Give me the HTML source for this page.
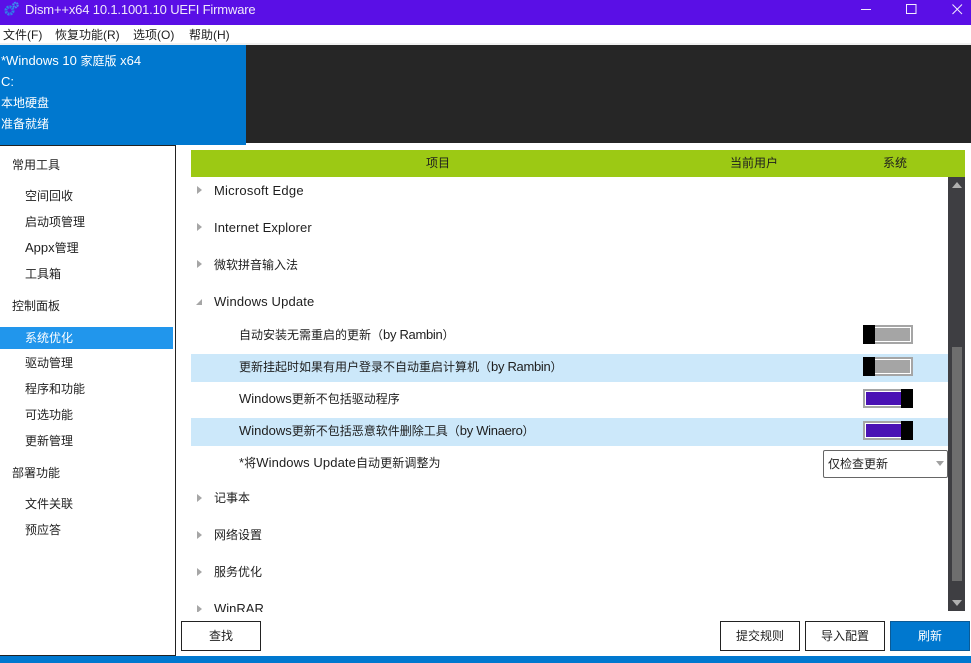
<!DOCTYPE html>
<html><head><meta charset="utf-8">
<style>
*{box-sizing:border-box}
html,body{margin:0;padding:0;width:971px;height:663px;overflow:hidden;background:#fff}
body{position:relative;font-family:"Liberation Sans","Noto Sans CJK SC",sans-serif;font-size:12px;color:#1e1e1e}
.a{position:absolute}
.t{position:absolute;white-space:nowrap;line-height:18px;height:18px}
.t b{font-weight:normal;font-size:13px}
.t b.n{letter-spacing:-.3px}
.w{color:#fff}
.arr{position:absolute;width:0;height:0;border-top:4px solid transparent;border-bottom:4px solid transparent;border-left:5px solid #a6a6a6}
.sw{position:absolute;left:863px;width:50px;height:19px;border:2px solid #a5a5a5;background:#a5a5a5}
.sw i{position:absolute;display:block}
.btn{position:absolute;top:621px;height:30px;border:1px solid #222;background:#fff;text-align:center;line-height:28px;font-size:12px}
</style></head><body>
<div class="a" style="left:0;top:0;width:971px;height:25px;background:#5a0fe6"></div>
<svg class="a" style="left:3px;top:1px" width="18" height="18" viewBox="0 0 18 18">
<circle cx="6.5" cy="9.500" r="3.600" fill="none" stroke="#2f7ee8" stroke-width="3" stroke-dasharray="2 .8"/>
<circle cx="12.500" cy="4" r="2.200" fill="none" stroke="#3f8cf0" stroke-width="2.200" stroke-dasharray="1.600 .6"/>
</svg>
<div class="t" style="left:25px;top:1px;font-size:13px;color:#efe8fb;letter-spacing:-.16px">Dism++x64 10.1.1001.10 UEFI Firmware</div>
<svg class="a" style="left:855px;top:0" width="116" height="25" viewBox="0 0 116 25">
<path d="M6 9.500H16" stroke="#f3edfd" stroke-width="1" fill="none"/>
<rect x="51.500" y="4.500" width="9.500" height="9" stroke="#f3edfd" stroke-width="1" fill="none"/>
<path d="M97.500 4.500L107 14M107 4.500L97.500 14" stroke="#f3edfd" stroke-width="1" fill="none"/>
</svg>

<div class="t" style="left:3px;top:26px">文件(F)</div>
<div class="t" style="left:55px;top:26px">恢复功能(R)</div>
<div class="t" style="left:133px;top:26px">选项(O)</div>
<div class="t" style="left:189px;top:26px">帮助(H)</div>
<div class="a" style="left:0;top:43px;width:971px;height:2px;background:#f0f0f0"></div>

<div class="a" style="left:0;top:45px;width:246px;height:100px;background:#0078cf"></div>
<div class="a" style="left:246px;top:45px;width:725px;height:98px;background:#262626"></div>
<div class="t w" style="left:1px;top:52px"><b>*Windows 10 </b>家庭版<b> x64</b></div>
<div class="t w" style="left:1px;top:73px"><b>C:</b></div>
<div class="t w" style="left:1px;top:94px">本地硬盘</div>
<div class="t w" style="left:1px;top:115px">准备就绪</div>

<div class="a" style="left:0;top:145px;width:176px;height:511px;background:#fff;border-top:1px solid #222;border-right:1px solid #222;border-bottom:1px solid #222"></div>
<div class="t" style="left:12px;top:156px">常用工具</div>
<div class="t" style="left:25px;top:187px">空间回收</div>
<div class="t" style="left:25px;top:213px">启动项管理</div>
<div class="t" style="left:25px;top:239px"><b>Appx</b>管理</div>
<div class="t" style="left:25px;top:265px">工具箱</div>
<div class="t" style="left:12px;top:297px">控制面板</div>
<div class="a" style="left:0;top:327px;width:173px;height:22px;background:#2196ec"></div>
<div class="t w" style="left:25px;top:329px">系统优化</div>
<div class="t" style="left:25px;top:354px">驱动管理</div>
<div class="t" style="left:25px;top:380px">程序和功能</div>
<div class="t" style="left:25px;top:406px">可选功能</div>
<div class="t" style="left:25px;top:432px">更新管理</div>
<div class="t" style="left:12px;top:464px">部署功能</div>
<div class="t" style="left:25px;top:495px">文件关联</div>
<div class="t" style="left:25px;top:521px">预应答</div>

<div class="a" style="left:191px;top:150px;width:774px;height:27px;background:#9cc914"></div>
<div class="t" style="left:426px;top:154px">项目</div>
<div class="t" style="left:730px;top:154px">当前用户</div>
<div class="t" style="left:883px;top:154px">系统</div>

<div class="a" style="left:191px;top:354px;width:757px;height:28px;background:#cce8fa"></div>
<div class="a" style="left:191px;top:418px;width:757px;height:28px;background:#cce8fa"></div>

<div class="arr" style="left:197px;top:186px"></div>
<div class="t" style="left:214px;top:182px;letter-spacing:.22px"><b>Microsoft Edge</b></div>
<div class="arr" style="left:197px;top:223px"></div>
<div class="t" style="left:214px;top:219px;letter-spacing:.1px"><b>Internet Explorer</b></div>
<div class="arr" style="left:197px;top:260px"></div>
<div class="t" style="left:214px;top:256px">微软拼音输入法</div>
<svg class="a" style="left:195px;top:298px" width="9" height="9"><path d="M1 7H7V1Z" fill="#a6a6a6"/></svg>
<div class="t" style="left:214px;top:293px;letter-spacing:.15px"><b>Windows Update</b></div>

<div class="t" style="left:239px;top:326px">自动安装无需重启的更新（<b class="n">by Rambin</b>）</div>
<div class="t" style="left:239px;top:358px">更新挂起时如果有用户登录不自动重启计算机（<b class="n">by Rambin</b>）</div>
<div class="t" style="left:239px;top:390px"><b>Windows</b>更新不包括驱动程序</div>
<div class="t" style="left:239px;top:422px"><b>Windows</b>更新不包括恶意软件删除工具（<b class="n">by Winaero</b>）</div>
<div class="t" style="left:239px;top:454px;letter-spacing:.1px"><b>*</b>将<b>Windows Update</b>自动更新调整为</div>

<div class="sw" style="top:325px"><i style="left:0;top:0;width:46px;height:15px;border:1px solid #fff;background:#a5a5a5"></i><i style="left:-2px;top:-2px;width:12px;height:19px;background:#000"></i></div>
<div class="sw" style="top:357px"><i style="left:0;top:0;width:46px;height:15px;border:1px solid #fff;background:#a5a5a5"></i><i style="left:-2px;top:-2px;width:12px;height:19px;background:#000"></i></div>
<div class="sw" style="top:389px"><i style="left:0;top:0;width:46px;height:15px;border:1px solid #fff;background:#4a12b4"></i><i style="left:36px;top:-2px;width:12px;height:19px;background:#000"></i></div>
<div class="sw" style="top:421px"><i style="left:0;top:0;width:46px;height:15px;border:1px solid #fff;background:#4a12b4"></i><i style="left:36px;top:-2px;width:12px;height:19px;background:#000"></i></div>

<div class="a" style="left:823px;top:450px;width:125px;height:28px;background:#fff;border:1px solid #666;border-radius:2px"></div>
<div class="t" style="left:828px;top:455px">仅检查更新</div>
<svg class="a" style="left:936px;top:461px" width="9" height="6"><path d="M0 0H8L4 5Z" fill="#a0a0a0"/></svg>

<div class="arr" style="left:197px;top:494px"></div>
<div class="t" style="left:214px;top:489px">记事本</div>
<div class="arr" style="left:197px;top:531px"></div>
<div class="t" style="left:214px;top:526px">网络设置</div>
<div class="arr" style="left:197px;top:568px"></div>
<div class="t" style="left:214px;top:563px">服务优化</div>
<div class="a" style="left:191px;top:600px;width:700px;height:12px;overflow:hidden"><div class="arr" style="left:6px;top:5px"></div><div class="t" style="left:23px;top:0"><b>WinRAR</b></div></div>

<div class="a" style="left:948px;top:177px;width:17px;height:434px;background:#3e3e42"></div>
<div class="a" style="left:952px;top:347px;width:10px;height:234px;background:#6e6e6e"></div>
<svg class="a" style="left:952px;top:182px" width="10" height="6"><path d="M0 6H10L5 0Z" fill="#b0b0b0"/></svg>
<svg class="a" style="left:952px;top:600px" width="10" height="6"><path d="M0 0H10L5 6Z" fill="#b0b0b0"/></svg>

<div class="btn" style="left:181px;width:80px">查找</div>
<div class="btn" style="left:720px;width:80px">提交规则</div>
<div class="btn" style="left:805px;width:80px">导入配置</div>
<div class="btn" style="left:890px;width:80px;background:#0078cf;color:#fff;border-color:#0a5a96">刷新</div>

<div class="a" style="left:0;top:656px;width:971px;height:7px;background:#0078cf"></div>
</body></html>
